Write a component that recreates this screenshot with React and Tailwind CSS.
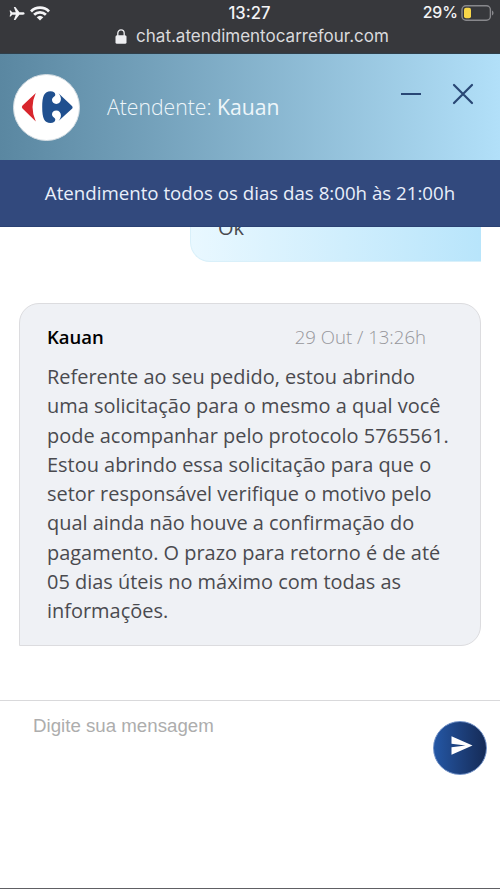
const messageLines = [
  'Referente ao seu pedido, estou abrindo',
  'uma solicitação para o mesmo a qual você',
  'pode acompanhar pelo protocolo 5765561.',
  'Estou abrindo essa solicitação para que o',
  'setor responsável verifique o motivo pelo',
  'qual ainda não houve a confirmação do',
  'pagamento. O prazo para retorno é de até',
  '05 dias úteis no máximo com todas as',
  'informações.',
];

export default function App() {
  return (
    <div className="flex h-[889px] w-[500px] flex-col overflow-hidden border-b border-[#606064] bg-white font-['Open_Sans',sans-serif]">
      <BrowserBar />
      <ChatHeader />
      <div className="flex h-[67px] shrink-0 items-center justify-center border-b border-[#2b4173] bg-[#32497d] text-[18.7px] whitespace-nowrap text-[#e9effa]">
        Atendimento todos os dias das 8:00h às 21:00h
      </div>
      <main className="flex h-[473px] shrink-0 flex-col overflow-hidden px-[19px]">
        <div className="flex h-[35px] w-[291px] shrink-0 items-end self-end rounded-bl-[20px] border-b border-l border-[#d9f0fa] bg-linear-to-r from-[#e9f8ff] to-[#b8e5fb] pb-[19px] pl-[27px] text-[20px] leading-[29px] text-[#4a4a4f]">
          Ok
        </div>
        <Message author="Kauan" time="29 Out / 13:26h" lines={messageLines} />
      </main>
      <Composer />
    </div>
  );
}

function BrowserBar() {
  return (
    <div className="h-[54px] shrink-0 border-b border-[#2f3f4a] bg-[#37383c] font-[Inter,sans-serif] text-[#f4f4f6]">
      <div className="flex h-[26px] items-center justify-between pr-[7px] pl-[9px]">
        <div className="flex w-[80px] items-center gap-[5px]">
          <svg className="h-[15px] w-[16px]" viewBox="0 0 16 15" fill="currentColor">
            <path d="M15.6 7.5c0-.8-.8-1.2-1.7-1.2h-3.5L6.4 1H4.8l2 5.3H3.2L1.7 4.4H.6l.8 3.1-.8 3.1h1.1l1.5-1.9h3.6l-2 5.3h1.6l4-5.3h3.5c.9 0 1.7-.4 1.7-1.2z" />
          </svg>
          <svg className="h-[15px] w-[20px]" viewBox="0 0 20 15" fill="none" stroke="currentColor" strokeWidth="2.8">
            <path d="M1 5.4a12.8 12.8 0 0 1 18 0" />
            <path d="M4.1 8.8a8.4 8.4 0 0 1 11.8 0" />
            <path d="M10 14.5 6.7 11.3a4.8 4.8 0 0 1 6.6 0z" fill="currentColor" stroke="none" />
          </svg>
        </div>
        <span className="mr-[3px] text-[16.6px] font-medium">13:27</span>
        <div className="flex w-[80px] items-center justify-end gap-[3px]">
          <span className="text-[15.8px] font-medium">29%</span>
          <svg className="-mr-px h-[16px] w-[33px] shrink-0" viewBox="0 0 33 16">
            <rect x="1" y=".8" width="28.4" height="14.4" rx="4" fill="none" stroke="#88888c" strokeWidth="1.4" />
            <rect x="3" y="2.8" width="7" height="10.4" rx="2" fill="#f8d648" />
            <path d="M31 5.5v5c1-.4 1.5-1.4 1.5-2.5S32 5.9 31 5.5z" fill="#88888c" />
          </svg>
        </div>
      </div>
      <div className="flex h-[21px] items-center justify-center gap-[9px] pl-[4px] text-[#dadadd]">
        <svg className="h-[15px] w-[12px]" viewBox="0 0 12 15">
          <rect x=".5" y="6.3" width="11" height="8.5" rx="1.5" fill="#eeeef1" />
          <path d="M2.8 7V4.3a3.2 3.4 0 0 1 6.4 0V7" fill="none" stroke="#eeeef1" strokeWidth="1.3" />
        </svg>
        <span className="text-[17px]">chat.atendimentocarrefour.com</span>
      </div>
    </div>
  );
}

function ChatHeader() {
  return (
    <header className="flex h-[106px] shrink-0 items-center bg-linear-to-r from-[#5a87a1] to-[#b2e0f9] pr-[26px] pl-[13px]">
      <div className="grid h-[67px] w-[67px] place-items-center rounded-full border border-[#d3dce2] bg-white">
        <svg className="h-[33px] w-[52px]" viewBox="0 0 52 33">
          <path d="M14.8 2 1.5 14.6q-1.4 1.5 0 3L14.8 30.5q-6.6-14.2 0-28.5z" fill="#d8262d" />
          <path
            d="M29.5.3c-6.2 0-8.3 5-8.3 15.9S23.3 32 29.5 32c3 0 4.8-1.5 4.8-3.5 0-1.9-3.3-2.2-3.3-5.2 0-2.3 1.9-3.9 4.2-3.9 3.4 0 5.2 2.8 4.6 6-.3 1.7-1 3-2.3 4.7L51 17.7q1.2-1.3 0-2.7L37.5 2.2c1.3 1.5 2 3 2.3 4.7.6 3.2-1.2 6-4.600 6-2.300 0-4.200-1.600-4.200-3.900 0-3 3.300-3.300 3.300-5.200 0-2-1.800-3.500-4.800-3.500z"
            fill="#20508f"
          />
        </svg>
      </div>
      <h1 className="ml-[27px] text-[21.2px] font-light text-[#eef6fa]">
        Atendente: <span className="font-normal">Kauan</span>
      </h1>
      <div className="mb-[26px] ml-auto flex items-center gap-[30px] text-[#294775]">
        <button aria-label="Minimizar">
          <svg className="h-[22px] w-[22px]" viewBox="0 0 22 22" stroke="currentColor" strokeWidth="2">
            <path d="M1 11h20" />
          </svg>
        </button>
        <button aria-label="Fechar">
          <svg className="h-[22px] w-[22px]" viewBox="0 0 22 22" stroke="currentColor" strokeWidth="2.2" strokeLinecap="round">
            <path d="m2 2 18 18M20 2 2 20" />
          </svg>
        </button>
      </div>
    </header>
  );
}

function Message({ author, time, lines }) {
  return (
    <article className="mt-[41px] h-[343px] shrink-0 rounded-[20px] rounded-bl-none border border-[#dcdcdf] bg-[#eff1f5] pl-[27px] whitespace-nowrap">
      <div className="mt-[19px] flex h-[28px] items-center justify-between pr-[54px]">
        <span className="text-[18.5px] font-semibold text-black">{author}</span>
        <span className="text-[18.6px] font-light text-[#96969b]">{time}</span>
      </div>
      <div className="mt-[11px] text-[19.95px] leading-[29.3px] text-[#4a4a4f]">
        {lines.map((line) => (
          <p key={line}>{line}</p>
        ))}
      </div>
    </article>
  );
}

function Composer() {
  return (
    <footer className="flex flex-1 justify-between border-t border-[#d9d9db] pr-[13px] pl-[33px]">
      <span className="mt-[13px] font-['Liberation_Sans',sans-serif] text-[18.7px] leading-[24px] text-[#adadad]">
        Digite sua mensagem
      </span>
      <button
        aria-label="Enviar"
        className="mt-[20px] grid h-[54px] w-[54px] place-items-center rounded-full border border-[#6f8fc5] bg-linear-to-r from-[#2457a5] to-[#152b57]"
      >
        <svg className="mb-[5px] ml-[3px] h-[19px] w-[22px]" viewBox="0 0 22 19" fill="white">
          <path d="M.5.3 21.5 9.5.5 18.7v-7.4l14-1.8-14-1.8z" />
        </svg>
      </button>
    </footer>
  );
}
